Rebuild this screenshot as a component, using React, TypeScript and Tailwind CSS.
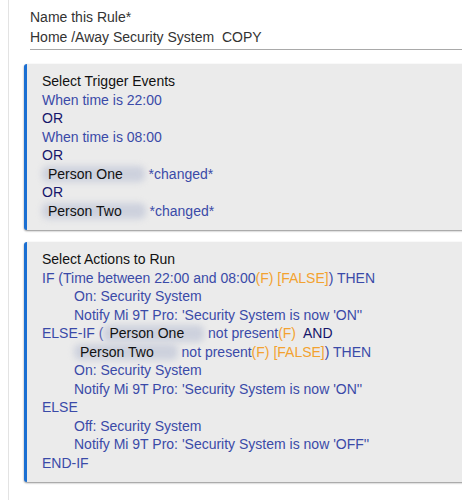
import React from "react";

const blue = "text-[#3a4aa8]";
const navy = "text-[#15156a]";
const orange = "text-[#f3a230]";

function Blur({ name, tail = 22 }: { name: string; tail?: number }) {
  return (
    <span className="relative inline-block">
      <span className="absolute inset-x-0 top-[1px] bottom-[1px] rounded-md bg-[#cdd1dd] blur-[3px]" />
      <span className="relative pl-[6px] text-[#111]">{name}</span>
      <span className="inline-block" style={{ width: tail }} />
    </span>
  );
}

function Card({ title, children }: { title: string; children: React.ReactNode }) {
  return (
    <div className="ml-[23px] -mr-4 rounded-l-[3px] border-l-[3px] border-[#1b6fd2] bg-[#ebebeb] pl-[15px] pt-2 pb-[10px] shadow-[0_1px_2px_rgba(0,0,0,0.45)]">
      <div className="text-[#111]">{title}</div>
      {children}
    </div>
  );
}

export default function App() {
  return (
    <div
      className="h-[500px] w-[462px] overflow-hidden bg-white text-[14px] leading-[18.5px]"
      style={{ fontFamily: '"Liberation Sans", Arial, sans-serif' }}
    >
      <div className="ml-2 h-full border-l border-[#e3e3e3]">
        <div className="ml-[21px] border-b border-[#a9a9a9] pt-[7px] pb-[2px] text-[#333] leading-[20px]">
          <div>Name this Rule*</div>
          <div>Home /Away Security System&nbsp; COPY</div>
        </div>

        <div className="mt-[14px] -ml-2">
          <Card title="Select Trigger Events">
            <div className={blue}>When time is 22:00</div>
            <div className={navy}>OR</div>
            <div className={blue}>When time is 08:00</div>
            <div className={navy}>OR</div>
            <div className={blue}>
              <Blur name="Person One" /> *changed*
            </div>
            <div className={navy}>OR</div>
            <div className={blue}>
              <Blur name="Person Two" tail={24} /> *changed*
            </div>
          </Card>

          <div className="h-3" />

          <Card title="Select Actions to Run">
            <div className={blue}>
              IF (Time between 22:00 and 08:00<span className={orange}>(F) [FALSE]</span>) THEN
            </div>
            <div className={`${blue} pl-8`}>On: Security System</div>
            <div className={`${blue} pl-8`}>Notify Mi 9T Pro: 'Security System is now 'ON''</div>
            <div className={blue}>
              ELSE-IF (<Blur name="Person One" tail={20} /> not present<span className={orange}>(F)</span>
              <span className={navy}>&nbsp; AND</span>
            </div>
            <div className={`${blue} pl-8`}>
              <Blur name="Person Two" tail={24} /> not present<span className={orange}>(F) [FALSE]</span>) THEN
            </div>
            <div className={`${blue} pl-8`}>On: Security System</div>
            <div className={`${blue} pl-8`}>Notify Mi 9T Pro: 'Security System is now 'ON''</div>
            <div className={blue}>ELSE</div>
            <div className={`${blue} pl-8`}>Off: Security System</div>
            <div className={`${blue} pl-8`}>Notify Mi 9T Pro: 'Security System is now 'OFF''</div>
            <div className={blue}>END-IF</div>
          </Card>
        </div>
      </div>
    </div>
  );
}
